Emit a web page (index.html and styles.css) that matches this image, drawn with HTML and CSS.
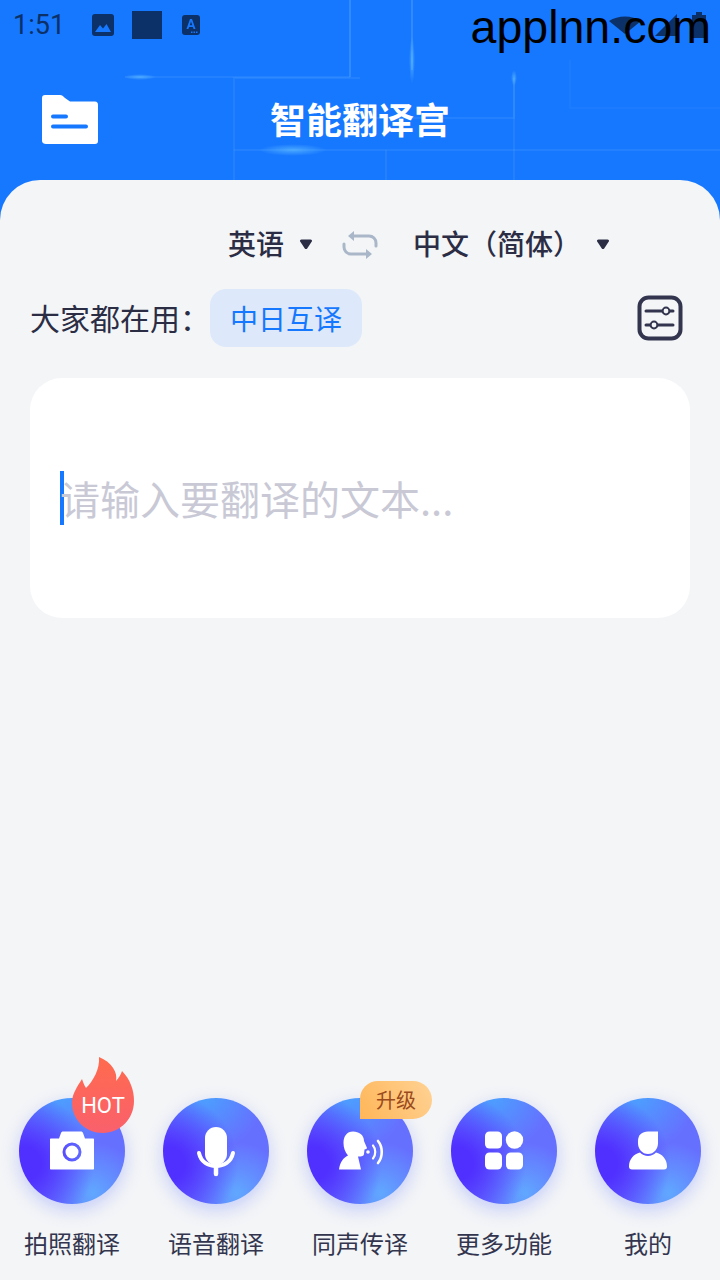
FILE: index.html
```html
<!DOCTYPE html>
<html>
<head>
  <title>智能翻译官</title>
  <link rel="stylesheet" href="styles.css">
</head>
<body>

  <div class="page">
    <!-- circuit lines behind the header -->
    <svg class="header-art" width="720" height="220" viewBox="0 0 720 220">
      <defs>
        <radialGradient id="glow">
          <stop offset="0" stop-color="#5cb8ff" stop-opacity="0.75"/>
          <stop offset="1" stop-color="#5cb8ff" stop-opacity="0"/>
        </radialGradient>
      </defs>
      <g stroke="#5aa8ff" stroke-opacity="0.2" stroke-width="2" fill="none">
        <path d="M125 77H350"/>
        <path d="M234 180V78H360"/>
        <path d="M234 150H720"/>
        <path d="M386 150V180"/>
        <path d="M360 118H514V78"/>
        <path d="M514 78V180"/>
      </g>
      <g stroke="#5aa8ff" stroke-opacity="0.4" stroke-width="2" fill="none">
        <path d="M350 0V77"/>
        <path d="M412 0V70"/>
      </g>
      <path d="M570 60V108H720" stroke="#5aa8ff" stroke-opacity="0.1" stroke-width="2" fill="none"/>
      <ellipse cx="140" cy="77" rx="16" ry="3" fill="url(#glow)"/>
      <ellipse cx="293" cy="150" rx="34" ry="6" fill="url(#glow)"/>
      <ellipse cx="412" cy="60" rx="3" ry="24" fill="url(#glow)"/>
      <ellipse cx="514" cy="78" rx="3" ry="8" fill="url(#glow)"/>
    </svg>

    <div class="status-bar">
      <span class="status-time">1:51</span>
      <svg class="status-photo" width="24" height="24" viewBox="0 0 24 24">
        <rect x="1" y="1" width="22" height="22" rx="3" fill="#0c3168"/>
        <path d="M4 19L9 12L12 15.5L15.5 11L20 19Z" fill="#1677ff"/>
      </svg>
      <span class="status-square"></span>
      <svg class="status-a" width="20" height="22" viewBox="0 0 20 22">
        <rect x="1" y="1" width="18" height="20" rx="3" fill="#0c3168"/>
        <path d="M5.5 15L9 5H11L14.5 15H12.6L11.9 13H8.1L7.4 15ZM8.7 11.3H11.3L10 7.6Z" fill="#1677ff"/>
        <path d="M10 17.500h1.500v1.500h-1.500zM12.500 17.500h1.500v1.500h-1.500zM15 17.500h1.500v1.500h-1.500z" fill="#1677ff"/>
      </svg>
      <div class="status-right">
        <svg width="32" height="18" viewBox="0 0 32 18"><path d="M0 5C9 -1 23 -1 32 5L16 18Z" fill="#0c3168"/></svg>
        <svg width="26" height="26" viewBox="0 0 26 26"><path d="M24 2V24H2Z" fill="#0c3168"/></svg>
        <svg width="16" height="26" viewBox="0 0 16 26"><path d="M5 0H11V3H15V26H1V3H5Z" fill="#0c3168"/></svg>
      </div>
    </div>
    <div class="watermark">applnn.com</div>

    <header class="app-header">
      <svg class="folder-icon" width="56" height="50" viewBox="0 0 56 50">
        <path d="M3 0H18C20 0 21 1 23 3L28 6.500H53C55 6.500 56 8 56 10V46C56 48 55 49 53 49H4C2 49 0 48 0 46V3C0 1 1 0 3 0Z" fill="#fff"/>
        <path d="M11 21.500H24M11 31.500H44" stroke="#1677ff" stroke-width="4" stroke-linecap="round"/>
      </svg>
      <h1 class="app-title">智能翻译宫</h1>
    </header>

    <main class="sheet">
      <div class="lang-row">
        <span class="lang-name">英语</span>
        <svg class="lang-arrow" width="14" height="12" viewBox="0 0 14 12"><path d="M2.500 1.500H11.500C12.800 1.500 13.400 2.600 12.800 3.600L8.200 10.400C7.600 11.200 6.400 11.200 5.800 10.400L1.200 3.600C0.600 2.600 1.200 1.500 2.500 1.500Z" fill="#2b2d45"/></svg>
        <svg class="swap-icon" width="36" height="30" viewBox="0 0 36 30">
          <path d="M10 6H27C31 6 34 9 34 13V16M26 24H9C5 24 2 21 2 17V14" stroke="#a9b7c9" stroke-width="3" fill="none" stroke-linecap="round"/>
          <path d="M12 1V11L6 6ZM24 19V29L30 24Z" fill="#a9b7c9"/>
        </svg>
        <span class="lang-name lang-target">中文（简体）</span>
        <svg class="lang-arrow" width="14" height="12" viewBox="0 0 14 12"><path d="M2.500 1.500H11.500C12.800 1.500 13.400 2.600 12.800 3.600L8.200 10.400C7.600 11.200 6.400 11.200 5.800 10.400L1.200 3.600C0.600 2.600 1.200 1.500 2.500 1.500Z" fill="#2b2d45"/></svg>
      </div>

      <div class="common-row">
        <span class="common-label">大家都在用：</span>
        <span class="chip">中日互译</span>
        <svg class="filter-icon" width="46" height="46" viewBox="0 0 46 46">
          <rect x="2.500" y="2.500" width="41" height="41" rx="9" fill="none" stroke="#33354f" stroke-width="4"/>
          <path d="M9 16H36M9 30H36" stroke="#33354f" stroke-width="3" stroke-linecap="round"/>
          <circle cx="29" cy="16" r="3.400" fill="#f4f5f7" stroke="#33354f" stroke-width="2"/>
          <circle cx="17" cy="30" r="3.400" fill="#f4f5f7" stroke="#33354f" stroke-width="2"/>
        </svg>
      </div>

      <div class="input-card">
        <span class="caret"></span>
        <span class="placeholder">请输入要翻译的文本...</span>
      </div>

      <nav class="tool-nav">
        <div class="tool">
          <div class="tool-circle">
            <svg width="52" height="52" viewBox="0 0 52 52">
              <path fill-rule="evenodd" d="M5 13.500H13L15 8C15.500 7 16 6.500 17 6.500H35C36 6.500 36.500 7 37 8L39 13.500H47C47.600 13.500 48 13.900 48 14.500V43.500C48 44.100 47.600 44.500 47 44.500H5C4.400 44.500 4 44.100 4 43.500V14.500C4 13.900 4.400 13.500 5 13.500ZM26 17.500A9.500 9.500 0 1 0 26 36.500A9.500 9.500 0 1 0 26 17.500ZM26 20.500A6.500 6.500 0 1 1 26 33.500A6.500 6.500 0 1 1 26 20.500Z" fill="#fff"/>
            </svg>
            <div class="hot-badge">
              <svg width="62" height="76" viewBox="0 0 62 76">
                <defs>
                  <linearGradient id="flame" x1="0" y1="0" x2="0" y2="1">
                    <stop offset="0" stop-color="#ff6b4e"/>
                    <stop offset="1" stop-color="#f9606c"/>
                  </linearGradient>
                </defs>
                <path d="M27 0C40 5 46 16 44 24C47 21 49 17 50 14C58 22 62 33 62 44C62 62 48 76 31 76C14 76 0 63 0 46C0 37 5 30 10 22C11 25 12 28 14 31C21 24 28 12 27 0Z" fill="url(#flame)"/>
              </svg>
              <span class="hot-text">HOT</span>
            </div>
          </div>
          <span class="tool-label">拍照翻译</span>
        </div>

        <div class="tool">
          <div class="tool-circle">
            <svg width="52" height="52" viewBox="0 0 52 52">
              <rect x="15" y="2" width="22" height="38" rx="11" fill="#fff"/>
              <path d="M9 28C11 37 18 41 26 41C34 41 41 37 43 28" stroke="#fff" stroke-width="4" fill="none" stroke-linecap="round"/>
              <path d="M26 41V49" stroke="#fff" stroke-width="4.500" stroke-linecap="round"/>
            </svg>
          </div>
          <span class="tool-label">语音翻译</span>
        </div>

        <div class="tool">
          <div class="tool-circle">
            <svg width="52" height="52" viewBox="0 0 52 52">
              <path d="M19 6.500C25 6.500 30 10 30 16L33 23C33 24 31.500 24 30.500 24.500L30 29C30 31 28 31.500 24 31.500L27 44.500H5C6 37 9 33 14 30.500C11 27 9.500 23 9.500 18C9.500 11 13 6.500 19 6.500Z" fill="#fff"/>
              <circle cx="34" cy="27" r="1.800" fill="#fff"/>
              <path d="M39 20.500C42 24 42 30 39 33.500" stroke="#fff" stroke-width="2.200" fill="none" stroke-linecap="round"/>
              <path d="M44 16C49 22 49 32 44 38" stroke="#fff" stroke-width="2.600" fill="none" stroke-linecap="round"/>
            </svg>
            <div class="upgrade-badge">升级</div>
          </div>
          <span class="tool-label">同声传译</span>
        </div>

        <div class="tool">
          <div class="tool-circle">
            <svg width="52" height="52" viewBox="0 0 52 52">
              <rect x="7" y="6.500" width="17" height="17" rx="4.500" fill="#fff"/>
              <circle cx="36.500" cy="15" r="8.700" fill="#fff"/>
              <rect x="7" y="27.500" width="17" height="17" rx="4.500" fill="#fff"/>
              <rect x="28" y="27.500" width="17" height="17" rx="4.500" fill="#fff"/>
            </svg>
          </div>
          <span class="tool-label">更多功能</span>
        </div>

        <div class="tool">
          <div class="tool-circle">
            <svg width="52" height="52" viewBox="0 0 52 52">
              <path d="M26 6.500H36V18C36 24 32 29 26 29C20 29 16 24 16 18V16C16 10 20 6.500 26 6.500Z" fill="#fff"/>
              <path d="M18 27.500C22 32 30 32 34 27.500C40 29 45 34 45 41.500C45 43.500 44 44.500 42 44.500H10C8 44.500 7 43.500 7 41.500C7 34 12 29 18 27.500Z" fill="#fff"/>
            </svg>
          </div>
          <span class="tool-label">我的</span>
        </div>
      </nav>
    </main>
  </div>

</body>
</html>
```

FILE: styles.css
```css
* {
  box-sizing: border-box;
}

body {
  margin: 0;
  font-family: "Noto Sans CJK SC", "Noto Sans", sans-serif;
  color: #2b2d45;
}

svg {
  display: block;
  flex-shrink: 0;
}

.page {
  position: relative;
  width: 720px;
  height: 1280px;
  overflow: hidden;
  display: flex;
  flex-direction: column;
  background: #1677ff;
}

.header-art {
  position: absolute;
  top: 0;
  left: 0;
}

/* status bar */
.status-bar {
  position: relative;
  height: 50px;
  padding: 0 13px;
  display: flex;
  align-items: center;
  color: #0c3168;
}

.status-time {
  font-family: Roboto, sans-serif;
  font-size: 27px;
  width: 78px;
}

.status-photo {
  margin-right: 17px;
}

.status-square {
  width: 30px;
  height: 28px;
  background: #0c3168;
  margin-right: 19px;
}

.status-right {
  margin-left: auto;
  display: flex;
  align-items: center;
  gap: 12px;
}

.watermark {
  position: absolute;
  top: -2px;
  right: 9px;
  font-family: "Liberation Sans", sans-serif;
  font-size: 46.500px;
  line-height: 58px;
  color: #000;
}

/* header */
.app-header {
  position: relative;
  height: 130px;
  padding: 45px 0 0 42px;
}

.app-title {
  position: absolute;
  top: 43px;
  left: 0;
  width: 720px;
  margin: 0;
  text-align: center;
  font-size: 36px;
  font-weight: 700;
  line-height: 50px;
  color: #fff;
}

/* main sheet */
.sheet {
  position: relative;
  flex: 1;
  display: flex;
  flex-direction: column;
  background: #f4f5f7;
  border-radius: 40px 40px 0 0;
}

.lang-row {
  display: flex;
  align-items: center;
  height: 40px;
  margin-top: 44px;
  padding-left: 228px;
}

.lang-name {
  font-size: 28px;
  font-weight: 500;
  line-height: 38px;
  margin-bottom: 2px;
}

.lang-arrow {
  margin-left: 15px;
}

.swap-icon {
  margin: 1px 0 0 29px;
}

.lang-target {
  margin-left: 35px;
}

.common-row {
  display: flex;
  align-items: center;
  height: 58px;
  margin-top: 25px;
  padding: 0 37px 0 30px;
}

.common-label {
  font-size: 30px;
  line-height: 40px;
  margin-bottom: 3px;
  width: 180px;
}

.chip {
  height: 58px;
  width: 152px;
  border-radius: 16px;
  background: #dde9fa;
  color: #1677ff;
  font-size: 28px;
  line-height: 58px;
  text-align: center;
}

.filter-icon {
  margin-left: auto;
}

.input-card {
  display: flex;
  align-items: center;
  height: 240px;
  margin: 31px 30px 0;
  padding-left: 30px;
  background: #fff;
  border-radius: 32px;
}

.caret {
  width: 4px;
  height: 54px;
  background: #1677ff;
  margin-right: -4px;
}

.placeholder {
  font-size: 40px;
  line-height: 54px;
  color: #c9c9d6;
}

/* bottom tools */
.tool-nav {
  display: flex;
  margin-top: auto;
  padding-bottom: 20px;
}

.tool {
  width: 144px;
  display: flex;
  flex-direction: column;
  align-items: center;
}

.tool-circle {
  position: relative;
  width: 106px;
  height: 106px;
  border-radius: 50%;
  display: flex;
  align-items: center;
  justify-content: center;
  background:
    radial-gradient(circle at 5% 62%, #5030ff 0, #5030ff 14%, rgba(80, 48, 255, 0) 58%),
    radial-gradient(circle at 70% 90%, #60a8ff 0, rgba(96, 168, 255, 0) 42%),
    radial-gradient(circle at 40% -4%, #4aa2ff 0, rgba(74, 162, 255, 0) 46%),
    #6670ff;
  box-shadow: 0 6px 18px rgba(82, 110, 255, 0.3);
}

.tool-label {
  margin-top: 22px;
  font-size: 24px;
  line-height: 34px;
  color: #33354f;
}

.hot-badge {
  position: absolute;
  left: 53px;
  top: -41px;
  width: 62px;
  height: 76px;
}

.hot-text {
  position: absolute;
  left: 0;
  top: 35px;
  width: 62px;
  text-align: center;
  font-family: Roboto, sans-serif;
  font-size: 22px;
  line-height: 28px;
  color: #fff;
}

.upgrade-badge {
  position: absolute;
  left: 53px;
  top: -17px;
  width: 72px;
  height: 38px;
  border-radius: 18px 19px 19px 0;
  background: linear-gradient(60deg, #ffb658, #ffd294);
  color: #9a4a1c;
  font-size: 20px;
  line-height: 38px;
  text-align: center;
}
```
